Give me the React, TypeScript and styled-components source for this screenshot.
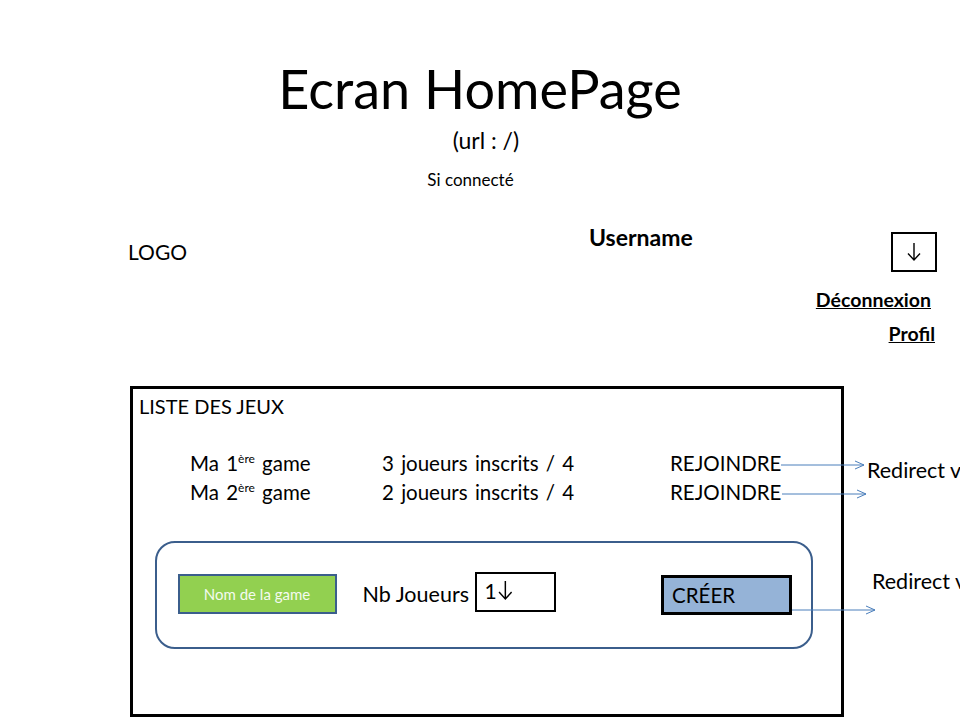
import React from 'react';
import styled, { createGlobalStyle } from 'styled-components';

const GlobalStyle = createGlobalStyle`
  html, body {
    margin: 0;
    padding: 0;
    background: #ffffff;
  }
  body {
    font-family: Lato, 'Liberation Sans', sans-serif;
    color: #000000;
  }
`;

const palette = {
  text: '#000000',
  outline: '#3b5e8c',
  connector: '#4a7ebb',
  green: '#92d050',
  lightBlue: '#95b3d7',
};

const Slide = styled.div`
  position: relative;
  width: 960px;
  height: 720px;
  overflow: hidden;
  background: white;
`;

const Header = styled.header`
  display: flex;
  flex-direction: column;
  align-items: center;
  padding-top: 57px;
  height: 192px;
  box-sizing: border-box;
`;

const Title = styled.h1`
  margin: 0;
  font-weight: 400;
  font-size: 54px;
  line-height: 64px;
`;

const Url = styled.div`
  font-size: 23px;
  line-height: 26px;
  margin: 6px 0 0 12px;
`;

const Condition = styled.div`
  font-size: 17px;
  line-height: 22px;
  margin: 16px 0 0 -19px;
`;

const Nav = styled.nav`
  display: grid;
  grid-template-columns: 461px 1fr auto;
  padding: 31px 23px 0 128px;
  height: 194px;
  box-sizing: border-box;
`;

const Logo = styled.div`
  font-size: 21px;
  line-height: 28px;
  margin-top: 15px;
`;

const Username = styled.div`
  font-size: 23px;
  font-weight: 700;
  line-height: 28px;
`;

const UserMenu = styled.div`
  display: flex;
  flex-direction: column;
  align-items: flex-end;
`;

const DropButton = styled.div`
  width: 46px;
  height: 40px;
  box-sizing: border-box;
  border: 2px solid ${palette.text};
  display: flex;
  align-items: center;
  justify-content: center;
  margin-top: 9px;
`;

const MenuLink = styled.a<{ offset: number; shift?: number }>`
  font-size: 19.5px;
  font-weight: 700;
  text-decoration: underline;
  color: ${palette.text};
  line-height: 24px;
  margin-top: ${props => props.offset}px;
  margin-right: ${props => props.shift ?? 0}px;
`;

const GamesArea = styled.section`
  display: flex;
  align-items: flex-start;
  padding-left: 130px;
`;

const GamesBox = styled.div`
  flex-shrink: 0;
  width: 714px;
  height: 331px;
  box-sizing: border-box;
  border: 3px solid ${palette.text};
  padding: 4px 0 0 6px;
  display: flex;
  flex-direction: column;
`;

const BoxTitle = styled.div`
  font-size: 20px;
  line-height: 26px;
`;

const GameList = styled.div`
  display: flex;
  flex-direction: column;
  margin: 30px 0 0 51px;
`;

const GameRow = styled.div`
  display: grid;
  grid-template-columns: 192px 288px auto;
  font-size: 20.5px;
  line-height: 29px;
  word-spacing: 2px;
  sup {
    font-size: 12px;
    line-height: 0;
    vertical-align: 8px;
    word-spacing: 0;
  }
`;

const CreatePanel = styled.div`
  margin: 34px 0 0 16px;
  width: 658px;
  height: 108px;
  box-sizing: border-box;
  border: 2.5px solid ${palette.outline};
  border-radius: 20px;
  display: flex;
  align-items: center;
  padding: 0 19px 0 20.5px;
`;

const NameButton = styled.div`
  width: 159px;
  height: 40px;
  box-sizing: border-box;
  background: ${palette.green};
  border: 2px solid ${palette.outline};
  color: #f4fbef;
  font-size: 15px;
  display: flex;
  align-items: center;
  justify-content: center;
  margin-top: -2px;
`;

const PlayersLabel = styled.div`
  width: 108px;
  font-size: 21.5px;
  white-space: nowrap;
  margin: -2px 4px 0 26px;
`;

const PlayersSelect = styled.div`
  width: 81px;
  height: 40px;
  box-sizing: border-box;
  border: 2px solid ${palette.text};
  display: flex;
  align-items: center;
  padding: 0 0 4px 8px;
  font-size: 21px;
  margin-top: -6px;
  gap: 1px;
`;

const CreateButton = styled.div`
  margin-left: auto;
  width: 131px;
  height: 40px;
  box-sizing: border-box;
  background: ${palette.lightBlue};
  border: 3px solid ${palette.text};
  font-size: 20.5px;
  display: flex;
  align-items: center;
  padding: 0 0 0 8px;
  margin-top: -1px;
`;

const SideNotes = styled.div`
  display: flex;
  flex-direction: column;
  margin-left: 23px;
`;

const Note = styled.div<{ offset: number; shift?: number }>`
  font-size: 21.5px;
  line-height: 26px;
  white-space: nowrap;
  margin-top: ${props => props.offset}px;
  margin-left: ${props => props.shift ?? 0}px;
`;

const Connector = styled.svg`
  position: absolute;
  overflow: visible;
  pointer-events: none;
`;

const Arrow: React.FC<{ x: number; y: number; length: number }> = ({ x, y, length }) => (
  <Connector style={{ left: x, top: y - 6 }} width={length} height={12}>
    <line x1={0} y1={6} x2={length} y2={6} stroke={palette.connector} strokeWidth={1} />
    <polyline
      points={`${length - 9},2 ${length},6 ${length - 9},10`}
      fill="none"
      stroke={palette.connector}
      strokeWidth={1}
    />
  </Connector>
);

const DownArrow: React.FC<{ size?: number }> = ({ size = 20 }) => (
  <svg width={size * 0.7} height={size} viewBox="0 0 14 20">
    <path d="M7 1 V18 M1 11.5 L7 18 L13 11.5" fill="none" stroke="#000" strokeWidth={1.4} />
  </svg>
);

const games = [
  { rank: '1', players: 3 },
  { rank: '2', players: 2 },
];

export default function App() {
  return (
    <Slide>
      <GlobalStyle />
      <Header>
        <Title>Ecran HomePage</Title>
        <Url>(url : /)</Url>
        <Condition>Si connecté</Condition>
      </Header>

      <Nav>
        <Logo>LOGO</Logo>
        <Username>Username</Username>
        <UserMenu>
          <DropButton>
            <DownArrow />
          </DropButton>
          <MenuLink offset={16} shift={6}>Déconnexion</MenuLink>
          <MenuLink offset={10} shift={2}>Profil</MenuLink>
        </UserMenu>
      </Nav>

      <GamesArea>
        <GamesBox>
          <BoxTitle>LISTE DES JEUX</BoxTitle>
          <GameList>
            {games.map(game => (
              <GameRow key={game.rank}>
                <span>
                  Ma {game.rank}
                  <sup>ère</sup> game
                </span>
                <span>{game.players} joueurs inscrits / 4</span>
                <span>REJOINDRE</span>
              </GameRow>
            ))}
          </GameList>
          <CreatePanel>
            <NameButton>Nom de la game</NameButton>
            <PlayersLabel>Nb Joueurs</PlayersLabel>
            <PlayersSelect>
              1<DownArrow size={21} />
            </PlayersSelect>
            <CreateButton>CRÉER</CreateButton>
          </CreatePanel>
        </GamesBox>
        <SideNotes>
          <Note offset={71}>Redirect vers la page de la game</Note>
          <Note offset={85} shift={5}>Redirect vers la nouvelle game</Note>
        </SideNotes>
      </GamesArea>

      <Arrow x={781} y={465} length={83} />
      <Arrow x={782} y={494} length={84} />
      <Arrow x={792} y={610} length={83} />
    </Slide>
  );
}
